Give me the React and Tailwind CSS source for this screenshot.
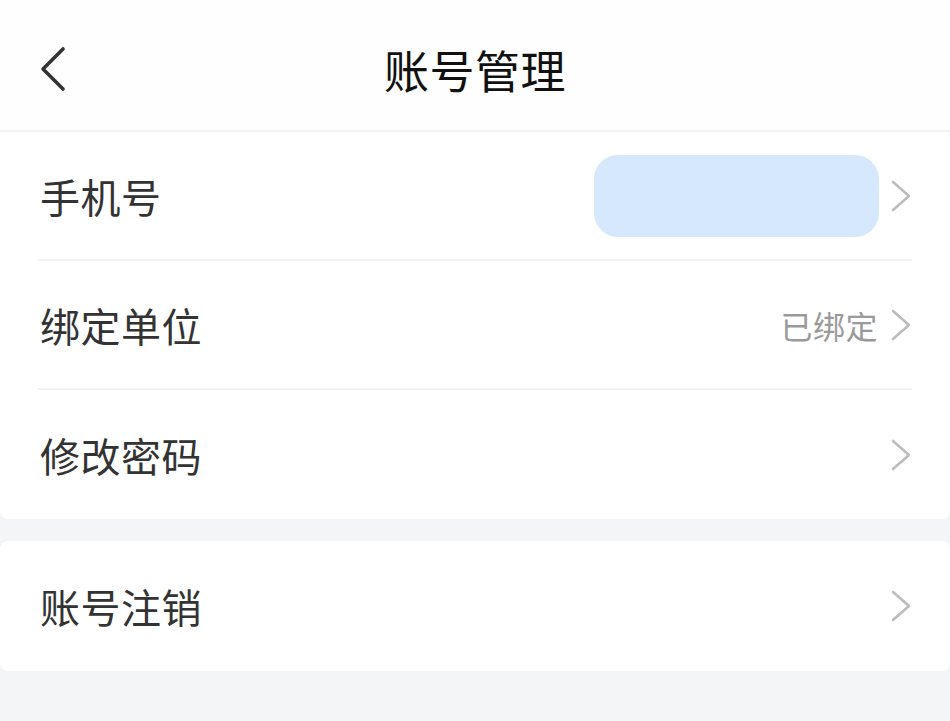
import React from "react";

const Chevron = () => (
  <svg width="22" height="34" viewBox="0 0 22 34" fill="none" className="shrink-0">
    <path d="M3 3 L19 17 L3 31" stroke="#bcbcbc" strokeWidth="2.6" strokeLinecap="round" strokeLinejoin="round" />
  </svg>
);

const Row = ({ label, right, divider, h = "h-[129px]" }) => (
  <div className={`flex ${h} items-stretch`}>
    <div className={`flex flex-1 items-center ml-[38px] mr-[38px] ${divider ? "border-b-2 border-[#f2f2f2]" : ""}`}>
      <span className="flex-1 pl-[2px] text-[40px] text-[#333333] tracking-[0.5px]">{label}</span>
      {right}
      <Chevron />
    </div>
  </div>
);

export default function App() {
  return (
    <div
      className="w-[950px] h-[721px] bg-[#f4f5f7] overflow-hidden"
      style={{ fontFamily: '"Noto Sans CJK SC", "Noto Sans", sans-serif' }}
    >
      <div className="relative flex h-[132px] items-center justify-center bg-[#fefefe] border-b-2 border-[#f4f4f4]">
        <svg className="absolute left-[38px] top-[46px]" width="30" height="46" viewBox="0 0 30 46" fill="none">
          <path d="M25 3 L5 23 L25 43" stroke="#333" strokeWidth="3.6" strokeLinecap="round" strokeLinejoin="round" />
        </svg>
        <span className="text-[45px] text-[#111] tracking-[0.5px] mt-[10px]">账号管理</span>
      </div>
      <div className="bg-white rounded-b-[8px]">
        <Row
          label="手机号"
          divider
          right={<div className="mr-[11px] h-[82px] w-[285px] rounded-[24px] bg-[#d6e8fb]" />}
        />
        <Row
          label="绑定单位"
          divider
          right={<span className="mr-[12px] text-[32px] text-[#9a9a9a] tracking-[0.5px]">已绑定</span>}
        />
        <Row label="修改密码" />
      </div>
      <div className="mt-[22px] bg-white rounded-[8px]">
        <Row label="账号注销" h="h-[130px]" />
      </div>
    </div>
  );
}
